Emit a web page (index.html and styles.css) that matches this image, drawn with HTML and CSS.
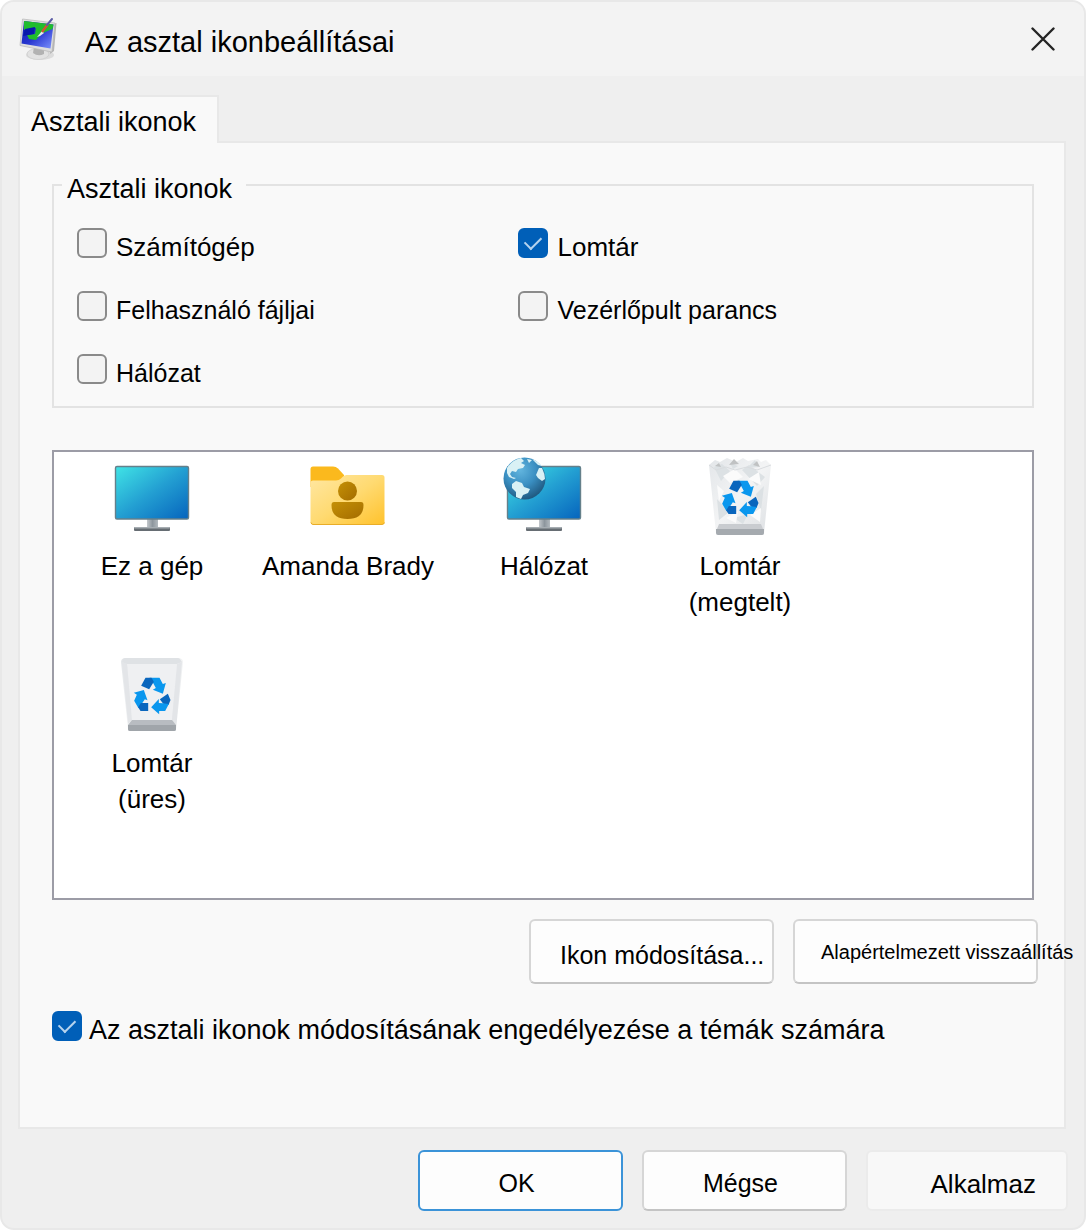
FILE: index.html
```html
<!DOCTYPE html>
<html lang="hu">
<head>
<meta charset="utf-8">
<meta name="viewport" content="width=device-width, initial-scale=1">
<title>Az asztal ikonbeállításai</title>
<link rel="stylesheet" href="styles.css">
</head>
<body>
<svg class="defs" aria-hidden="true">
  <defs>
    <linearGradient id="screen" x1="0" y1="0" x2="1" y2="1">
      <stop offset="0" stop-color="#40e4e6"/><stop offset=".5" stop-color="#239fd2"/><stop offset="1" stop-color="#0664bd"/>
    </linearGradient>
    <linearGradient id="neck" x1="0" y1="0" x2="1" y2="0">
      <stop offset="0" stop-color="#c3c8cc"/><stop offset=".5" stop-color="#8d969d"/><stop offset="1" stop-color="#b3babf"/>
    </linearGradient>
    <linearGradient id="folder" x1="0" y1="0" x2="1" y2="1">
      <stop offset="0" stop-color="#ffe7a3"/><stop offset=".5" stop-color="#ffda71"/><stop offset="1" stop-color="#ffc22c"/>
    </linearGradient>
    <linearGradient id="person" x1="0" y1="0" x2="1" y2="1">
      <stop offset="0" stop-color="#c59006"/><stop offset="1" stop-color="#a36c00"/>
    </linearGradient>
    <radialGradient id="globe" cx=".4" cy=".3" r=".75">
      <stop offset="0" stop-color="#62b5de"/><stop offset=".5" stop-color="#3a8fc2"/><stop offset="1" stop-color="#1d5379"/>
    </radialGradient>
    <linearGradient id="bin" x1="0" y1="0" x2="1" y2="1">
      <stop offset="0" stop-color="#e3e6e9"/><stop offset=".5" stop-color="#f3f4f5"/><stop offset="1" stop-color="#dde0e3"/>
    </linearGradient>
    <linearGradient id="titlescreen" x1="0" y1="0" x2="1" y2="1">
      <stop offset="0" stop-color="#0a1cae"/><stop offset=".5" stop-color="#2836d0"/><stop offset="1" stop-color="#7f95ff"/>
    </linearGradient>
    <g id="monitor">
      <rect x="35" y="61" width="11" height="10" fill="url(#neck)"/>
      <rect x="22" y="70" width="36" height="4" rx="1" fill="#666d73"/>
      <rect x="22" y="70" width="36" height="1.5" rx=".7" fill="#a6adb2"/>
      <rect x="3.5" y="9.5" width="73" height="52.5" rx="1.5" fill="url(#screen)" stroke="#65808b" stroke-width="1.4"/>
    </g>
    <g id="recycle" transform="translate(-12.5 -9) scale(.33333)">
      <path fill="#0a97ee" d="M150 98H180L190 117L199 114L190 146L160 134L169 129L158 109Z"/>
      <path fill="#0a66bd" d="M138 98H156L163 110L149 133L125 122Z"/>
      <path fill="#0a97ee" d="M103 143L133 135L144 166L136 163L122 184L117 190L104 167L112 149Z"/>
      <path fill="#0a66bd" d="M124 174H146V198H123L116 187Z"/>
      <path fill="#0a66bd" d="M181 163L205 146L213 165L207 180L191 176Z"/>
      <path fill="#0a97ee" d="M155 187L178 162V174L190 175L208 177L197 198H179V208Z"/>
    </g>
  </defs>
</svg>

<main class="window">
  <header class="titlebar">
    <svg class="titlebar-icon" viewBox="0 0 40 44" aria-hidden="true">
      <ellipse cx="22" cy="38" rx="14" ry="5" fill="#dcdcdc"/>
      <ellipse cx="20" cy="37" rx="11" ry="5.500" fill="#e2e2e2" stroke="#cacaca" stroke-width=".6"/>
      <path d="M16 30L26 32V37Q20 40 15 36Z" fill="#b2b2b2"/>
      <path d="M35 7L38.500 6L36 34L32 37Z" fill="#b5b5b5"/>
      <path d="M4.500 2L37 6L34 35L2 28.500Z" fill="#dedede" stroke="#b7b7b7" stroke-width=".7"/>
      <path d="M6 4L35.500 7.500L32.500 31.500L3.500 26.500Z" fill="url(#titlescreen)"/>
      <path d="M6 4L35.500 7.500L34.500 12Q29 14 23 17L18 23L11 22L9 18L17 17L18 11L6 13Z" fill="#20bd2d"/>
      <path d="M7 12L17 10L16 17L5 19Z" fill="#0719ab"/>
      <path d="M19 20L24 14L26 16L22 19Z" fill="#e5ecec"/>
      <path d="M24 15L30 7" stroke="#d15532" stroke-width="2.500"/>
      <path d="M29 8L34 2" stroke="#5b5ca5" stroke-width="2" stroke-linecap="round"/>
    </svg>
    <h1 class="titlebar-text">Az asztal ikonbeállításai</h1>
    <button class="close" type="button" aria-label="Bezárás">
      <svg viewBox="0 0 24 24" aria-hidden="true"><path d="M1.500 1.500L22.500 22.500M22.500 1.500L1.500 22.500" fill="none" stroke="#242424" stroke-width="2.400" stroke-linecap="round"/></svg>
    </button>
  </header>

  <form class="content">
    <div class="tabs" role="tablist">
      <button class="tab" type="button" role="tab" id="tab-icons" aria-selected="true" aria-controls="panel-icons">Asztali ikonok</button>
    </div>
    <section class="panel" id="panel-icons" role="tabpanel" aria-labelledby="tab-icons">
      <fieldset class="group">
        <legend class="group-title">Asztali ikonok</legend>
        <div class="options">
          <label class="check"><input type="checkbox"><span>Számítógép</span></label>
          <label class="check"><input type="checkbox" checked><span>Lomtár</span></label>
          <label class="check check-small"><input type="checkbox"><span>Felhasználó fájljai</span></label>
          <label class="check check-small"><input type="checkbox"><span>Vezérlőpult parancs</span></label>
          <label class="check check-small"><input type="checkbox"><span>Hálózat</span></label>
        </div>
      </fieldset>

      <ul class="icons">
        <li class="icon">
          <svg viewBox="0 0 80 80" aria-hidden="true"><use href="#monitor"/></svg>
          <span>Ez a gép</span>
        </li>
        <li class="icon">
          <svg viewBox="0 0 80 80" aria-hidden="true">
            <path d="M2.500 12Q2.500 9.500 5 9.500H25Q28 9.500 30 11.500L36 18V30H2.500Z" fill="#fbb91d"/>
            <path d="M5 23.500H28Q31 23.500 33 21.500L35 19.500Q36.500 18 38.500 18H74Q76.500 18 76.500 20.500V65Q76.500 67.500 74 67.500H5Q2.500 67.500 2.500 65V26Q2.500 23.500 5 23.500Z" fill="url(#folder)"/>
            <path d="M3 65.500Q3.500 67.500 5 67.500H74Q76 67.500 76.500 65.500" fill="none" stroke="#e9ad28"/>
            <circle cx="39.500" cy="34" r="9.500" fill="url(#person)"/>
            <path d="M26 45H53Q55.500 45 55.500 48Q55.500 62 39.500 62Q23.500 62 23.500 48Q23.500 45 26 45Z" fill="url(#person)"/>
          </svg>
          <span>Amanda Brady</span>
        </li>
        <li class="icon">
          <svg viewBox="0 0 80 80" aria-hidden="true">
            <use href="#monitor"/>
            <circle cx="20.500" cy="21.500" r="21" fill="url(#globe)"/>
            <g fill="#d9f1f5">
              <path d="M3 11Q8 3 17 1L20 4L17 6L21 8L19 11L14 12L12 15L8 14L6 17L8 20L12 21L10 22L5 20L3 16Z"/>
              <path d="M8 27L12 24L18 26L20 30L26 32L24 36L19 38L17 42L12 40L12 35L8 31Z"/>
              <path d="M28 2Q34 4 38 9L34 8L31 5Z"/>
              <path d="M35 11L38 11Q41 17 41 22L38 24L34 21L32 18Z"/>
              <path d="M23 2L28 3L25 6Z"/>
            </g>
          </svg>
          <span>Hálózat</span>
        </li>
        <li class="icon">
          <svg viewBox="0 0 80 80" aria-hidden="true">
            <path d="M9 8L15 3L20 5L27 1L36 5L43 1L48 4L58 2L61 5L66 3L71 8L64 76Q64 78 62 78H18Q16 78 16 76Z" fill="url(#bin)"/>
            <path d="M14 10L22 7L30 14L21 24ZM30 6L38 9L33 12ZM47 11L55 3L59 10ZM42 13L49 8L65 20L57 29ZM17 42L29 55L19 63ZM56 37L64 29L61 54ZM34 61L48 57L43 67Z" fill="#dce1e4"/>
            <path d="M23 19L35 12L43 20L30 26ZM48 22L59 15L61 28ZM17 28L24 34L19 44ZM26 61L38 54L36 66ZM50 58L61 51L60 65Z" fill="#fbfbfb"/>
            <path d="M29 8L34 2L39 7ZM53 8L57 4L60 10ZM15 9L19 6L21 10Z" fill="#c0c2c3"/>
            <path d="M9 8L16 13L26 10L35 13L47 10L57 13L71 8" fill="none" stroke="#d9dcdf"/>
            <path d="M19 67L17 72H63L61 67Z" fill="#c9ccd0"/>
            <path d="M16 72H64V76Q64 78 62 78H18Q16 78 16 76Z" fill="#a5aaaf"/>
            <use href="#recycle"/>
          </svg>
          <span>Lomtár<br>(megtelt)</span>
        </li>
        <li class="icon">
          <svg viewBox="0 0 80 80" aria-hidden="true">
            <path d="M9 8Q9 4 14 4H66Q71 4 71 8L64 75Q64 77 62 77H18Q16 77 16 75Z" fill="url(#bin)"/>
            <path d="M10 8L15 10H65L70 8L68 5Q67 4 66 4H14Q12 4 11 5Z" fill="#dfe2e5"/>
            <path d="M15 10H65L60 66H20Z" fill="#eff0f2"/>
            <path d="M10 8L15 10L20 66L16 70ZM70 8L65 10L60 66L64 70Z" fill="#e3e5e8"/>
            <path d="M20 66H60L64 71V75Q64 77 62 77H18Q16 77 16 75V71Z" fill="#b8bcc1"/>
            <path d="M16 71H64V75Q64 77 62 77H18Q16 77 16 75Z" fill="#a0a5aa"/>
            <use href="#recycle"/>
          </svg>
          <span>Lomtár<br>(üres)</span>
        </li>
      </ul>

      <div class="icon-actions">
        <button class="button button-action" type="button">Ikon módosítása...</button>
        <button class="button button-action button-compact" type="button">Alapértelmezett visszaállítás</button>
      </div>

      <label class="check check-large"><input type="checkbox" checked><span>Az asztali ikonok módosításának engedélyezése a témák számára</span></label>
    </section>

    <footer class="footer">
      <button class="button button-default" type="submit">OK</button>
      <button class="button" type="button">Mégse</button>
      <button class="button button-apply" type="button" disabled>Alkalmaz</button>
    </footer>
  </form>
</main>
</body>
</html>
```
FILE: styles.css
```css
* {
  box-sizing: border-box;
}

body {
  margin: 0;
  background: #fff;
  color: #000;
  font-family: "Liberation Sans", Arial, sans-serif;
  font-size: 26px;
  line-height: 30px;
}

button {
  font: inherit;
  color: inherit;
}

.defs {
  position: absolute;
  width: 0;
  height: 0;
}

.window {
  display: flex;
  flex-direction: column;
  min-height: 100vh;
  border: 2px solid #e8e8e8;
  border-radius: 14px;
  background: #efefef;
  overflow: hidden;
}

/* Title bar */
.titlebar {
  display: flex;
  align-items: center;
  height: 74px;
  padding: 0 20px 0 16px;
  background: #f3f3f3;
}

.titlebar-icon {
  width: 40px;
  height: 44px;
}

.titlebar-text {
  flex: 1;
  margin: 0;
  padding: 6px 0 0 27px;
  font-size: 29px;
  font-weight: 400;
}

.close {
  display: grid;
  place-items: center;
  width: 42px;
  height: 42px;
  padding: 0;
  border: 0;
  background: none;
}

.close svg {
  width: 24px;
  height: 24px;
}

/* Tab and its panel */
.content {
  flex: 1;
  display: flex;
  flex-direction: column;
  padding: 19px 16px 17px;
}

.tabs {
  display: flex;
}

.tab {
  z-index: 1;
  width: 201px;
  height: 48px;
  margin-bottom: -2px;
  padding: 4px 0 0 11px;
  border: 2px solid #e8e8e8;
  border-bottom: 0;
  background: #f9f9f9;
  font-size: 27px;
  text-align: left;
}

.panel {
  flex: 1;
  margin-right: 2px;
  padding: 23px 30px 30px 32px;
  border: 2px solid #e8e8e8;
  background: #f9f9f9;
}

.group {
  min-width: 0;
  margin: 0;
  padding: 24px 23px 18px;
  border: 2px solid #e3e3e3;
}

.group-title {
  margin-left: -15px;
  padding: 8px 14px 0 5px;
  font-size: 27px;
}

.options {
  display: grid;
  grid-template-columns: 9fr 10fr;
  row-gap: 29px;
}

/* Check boxes */
.check {
  display: flex;
  gap: 9px;
}

.check span {
  padding-top: 4px;
}

.check-small {
  font-size: 25px;
}

.check-large {
  gap: 7px;
  font-size: 27px;
}

.check input {
  appearance: none;
  flex: none;
  display: grid;
  place-items: center;
  width: 30px;
  height: 30px;
  margin: 0;
  border: 2px solid #8a8a8a;
  border-radius: 6px;
  background: #f3f3f3;
}

.check input:checked {
  border-color: #005fb8;
  background: #005fb8;
}

.check input:checked::after {
  content: "";
  width: 14px;
  height: 8px;
  margin-bottom: 4px;
  border: solid #b5d3ee;
  border-width: 0 0 2px 2px;
  transform: rotate(-45deg);
}

/* Icon list */
.icons {
  display: grid;
  grid-template-columns: repeat(auto-fill, 196px);
  grid-auto-rows: 197px;
  min-height: 450px;
  margin: 42px 0 19px;
  padding: 5px 0;
  border: 2px solid #9c9ca6;
  background: #fff;
  list-style: none;
}

.icon {
  display: flex;
  flex-direction: column;
  align-items: center;
  gap: 11px;
  line-height: 36px;
  text-align: center;
}

.icon svg {
  width: 80px;
  height: 80px;
  overflow: visible;
}

/* Buttons */
.button {
  width: 205px;
  height: 61px;
  padding: 4px 8px 0 0;
  border: 2px solid #d6d6d6;
  border-bottom-color: #c4c4c4;
  border-radius: 6px;
  background: #fdfdfd;
  font-size: 25px;
  white-space: nowrap;
}

.icon-actions {
  display: flex;
  justify-content: flex-end;
  gap: 19px;
  margin: 0 -4px 27px 0;
}

.button-action {
  width: 245px;
  height: 65px;
  padding: 6px 0 0 29px;
  text-align: left;
}

.button-compact {
  padding: 0 0 0 26px;
  font-size: 20px;
}

.button-default {
  border-color: #3b93d8;
}

.button-apply {
  width: 202px;
  padding: 6px 30px 0 0;
  border-color: #ebebeb;
  background: #f8f8f8;
  font-size: 26px;
  text-align: right;
}

.footer {
  display: flex;
  justify-content: flex-end;
  gap: 19px;
  padding-top: 21px;
}
```
